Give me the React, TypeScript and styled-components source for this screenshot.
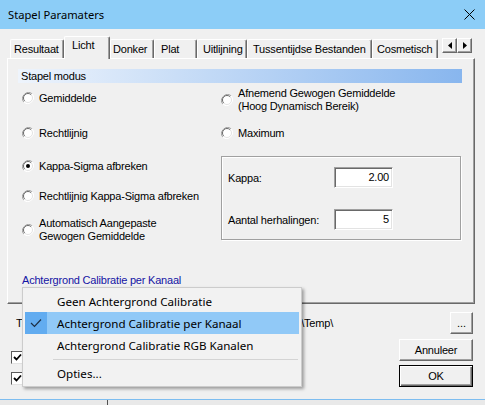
import React from 'react';
import styled, { createGlobalStyle } from 'styled-components';

const GlobalStyle = createGlobalStyle`
  html, body { margin: 0; padding: 0; }
  body {
    width: 485px;
    height: 405px;
    overflow: hidden;
    background: #e9e9e9;
    font-family: "Liberation Sans", Arial, sans-serif;
  }
  * { box-sizing: border-box; }
`;

const Window = styled.div`
  position: relative;
  width: 485px;
  display: flex;
  flex-direction: column;
`;

const TitleBar = styled.div`
  height: 29px;
  background: #8ccdf7;
  display: flex;
  align-items: center;
  padding: 0 10px 0 8px;
  font-family: "Noto Sans", sans-serif;
  font-size: 11.2px;
  color: #000;
`;

const TitleText = styled.span`
  flex: 1;
`;

const Body = styled.div`
  height: 370px;
  background: #f0f0f0;
  padding: 0 10px 0 7px;
  display: flex;
  flex-direction: column;
  font-family: "Liberation Sans", Arial, sans-serif;
  font-size: 11px;
  letter-spacing: -0.2px;
  color: #000;
`;

const TabStrip = styled.div`
  height: 29px;
  display: flex;
  align-items: flex-end;
  padding-left: 3px;
  position: relative;
  z-index: 1;
`;

const Tab = styled.div<{ $w: number; $pl: number; $active?: boolean }>`
  width: ${(p) => p.$w}px;
  height: ${(p) => (p.$active ? 23 : 19)}px;
  margin-bottom: ${(p) => (p.$active ? -1 : 0)}px;
  padding-left: ${(p) => p.$pl}px;
  padding-top: ${(p) => (p.$active ? 1 : 2)}px;
  background: #f0f0f0;
  border-top: 1px solid #fff;
  border-left: 1px solid #fff;
  border-right: 1px solid #696969;
  box-shadow: inset -1px 0 #a0a0a0;
  border-radius: 2px 2px 0 0;
  white-space: nowrap;
  line-height: 14px;
`;

const ScrollArrows = styled.div`
  display: flex;
  align-self: flex-start;
  margin-top: 9px;
  margin-left: 4px;
`;

const ArrowButton = styled.div`
  width: 15px;
  height: 15px;
  display: flex;
  align-items: center;
  justify-content: center;
  background: #f0f0f0;
  border: 1px solid;
  border-color: #fff #696969 #696969 #fff;
  box-shadow: inset -1px -1px #a0a0a0;
`;

const Panel = styled.div`
  height: 246px;
  width: 468px;
  border: 1px solid;
  border-color: #fff #696969 #696969 #fff;
  box-shadow: inset -1px -1px #a0a0a0;
  padding: 10px 12px 0 10px;
  display: flex;
  flex-direction: column;
`;

const SectionBar = styled.div`
  height: 14px;
  line-height: 14px;
  padding-left: 3px;
  background: linear-gradient(to right, #eef4fc, #88b6ee);
`;

const Options = styled.div`
  display: grid;
  grid-template-columns: 199px 240px;
  margin-left: 4px;
  align-items: start;
`;

const Column = styled.div`
  display: flex;
  flex-direction: column;
`;

const RadioRow = styled.div<{ $mt: number }>`
  display: flex;
  align-items: center;
  gap: 5px;
  margin-top: ${(p) => p.$mt}px;
`;

const RadioLabel = styled.span<{ $lh: number }>`
  line-height: ${(p) => p.$lh}px;
  white-space: nowrap;
`;

const ParamBox = styled.div`
  margin-top: 16px;
  height: 84px;
  width: 240px;
  border: 1px solid #a0a0a0;
  box-shadow: inset 1px 1px #fff, 1px 1px #fff;
  padding: 10px 0 0 6px;
  display: flex;
  flex-direction: column;
  gap: 21px;
`;

const FieldRow = styled.div`
  display: flex;
  align-items: center;
  height: 21px;
`;

const FieldLabel = styled.span`
  width: 106px;
`;

const NumberField = styled.div`
  width: 59px;
  height: 21px;
  background: #fff;
  border: 1px solid;
  border-color: #a0a0a0 #fff #fff #a0a0a0;
  box-shadow: inset 1px 1px #696969, inset -1px -1px #e3e3e3;
  text-align: right;
  padding: 2px 3px 0 0;
  line-height: 14px;
`;

const CalibLink = styled.div`
  margin: 30px 0 0 4px;
  line-height: 14px;
  color: #1414a4;
`;

const PathRow = styled.div`
  margin-top: 8px;
  height: 22px;
  display: flex;
  align-items: center;
`;

const PathField = styled.div`
  width: 317px;
  margin-left: 9px;
  display: flex;
  justify-content: space-between;
  white-space: nowrap;
`;

const Button = styled.div<{ $w: number; $default?: boolean }>`
  width: ${(p) => p.$w}px;
  height: 22px;
  display: flex;
  align-items: center;
  justify-content: center;
  background: #f0f0f0;
  border: 1px solid;
  border-color: ${(p) => (p.$default ? '#000' : '#fff #696969 #696969 #fff')};
  box-shadow: ${(p) =>
    p.$default
      ? 'inset 1px 1px #fff, inset -1px -1px #696969, inset -2px -2px #a0a0a0'
      : 'inset -1px -1px #a0a0a0'};
`;

const BrowseButton = styled(Button)`
  margin-left: auto;
  margin-right: 2px;
  letter-spacing: 0;
`;

const LowerRow = styled.div`
  margin-top: 5px;
  display: flex;
`;

const CheckColumn = styled.div`
  display: flex;
  flex-direction: column;
  gap: 8px;
  padding: 12px 0 0 4px;
`;

const CheckBoxBox = styled.div`
  width: 13px;
  height: 13px;
  background: #fff;
  border: 1px solid;
  border-color: #5a5a5a #e3e3e3 #e3e3e3 #5a5a5a;
  display: flex;
  align-items: center;
  justify-content: center;
`;

const ButtonColumn = styled.div`
  margin-left: auto;
  margin-right: 2px;
  display: flex;
  flex-direction: column;
  gap: 4px;
`;

const WindowEdge = styled.div`
  height: 1px;
  background: #7dbdf0;
`;

const Backdrop = styled.div`
  height: 5px;
  display: flex;
  background: #e9e9e9;
`;

const BackdropDivider = styled.div`
  margin-left: 107px;
  width: 1px;
  background: #505050;
`;

const Menu = styled.div`
  position: absolute;
  left: 22px;
  top: 287px;
  width: 280px;
  padding: 2px;
  background: #f2f2f2;
  border: 1px solid #cccccc;
  box-shadow: 2px 2px 3px rgba(0, 0, 0, 0.35);
  font-family: "Noto Sans", sans-serif;
  font-size: 11.6px;
  color: #000;
  z-index: 5;
`;

const MenuItem = styled.div<{ $selected?: boolean }>`
  height: 22px;
  display: flex;
  align-items: center;
  background: ${(p) => (p.$selected ? '#91c9f7' : 'transparent')};
  white-space: nowrap;
`;

const CheckGutter = styled.div<{ $selected?: boolean }>`
  width: 22px;
  height: 22px;
  margin-right: 10px;
  display: flex;
  align-items: center;
  justify-content: center;
  background: ${(p) => (p.$selected ? '#62acf0' : 'transparent')};
`;

const MenuSeparator = styled.div`
  height: 6px;
  display: flex;
  align-items: center;
  padding: 0 1px 0 28px;
  &::after {
    content: '';
    flex: 1;
    height: 1px;
    background: #d4d4d4;
  }
`;

const Radio = ({ checked }: { checked?: boolean }) => (
  <svg width="12" height="12" viewBox="0 0 12 12" style={{ flex: 'none' }}>
    <circle cx="6" cy="6" r="5.5" fill="#fff" />
    <path d="M10.2 1.8 A6 6 0 0 0 1.8 10.2" stroke="#a0a0a0" strokeWidth="1" fill="none" />
    <path d="M9.2 2.8 A4.5 4.5 0 0 0 2.8 9.2" stroke="#696969" strokeWidth="1" fill="none" />
    <path d="M1.8 10.2 A6 6 0 0 0 10.2 1.8" stroke="#ffffff" strokeWidth="1" fill="none" />
    <path d="M2.8 9.2 A4.5 4.5 0 0 0 9.2 2.8" stroke="#e3e3e3" strokeWidth="1" fill="none" />
    {checked && <circle cx="6" cy="6" r="2" fill="#000" />}
  </svg>
);

const CheckBox = () => (
  <CheckBoxBox>
    <svg width="9" height="9" viewBox="0 0 9 9">
      <path d="M1 4 L3.5 6.5 L8 1.5" stroke="#000" strokeWidth="1.8" fill="none" />
    </svg>
  </CheckBoxBox>
);

const tabs = [
  { label: 'Resultaat', w: 54, pl: 3 },
  { label: 'Licht', w: 46, pl: 7, active: true },
  { label: 'Donker', w: 44, pl: 2 },
  { label: 'Plat', w: 43, pl: 6 },
  { label: 'Uitlijning', w: 50, pl: 5 },
  { label: 'Tussentijdse Bestanden', w: 125, pl: 5 },
  { label: 'Cosmetisch', w: 66, pl: 4 },
];

export default function App() {
  return (
    <>
      <GlobalStyle />
      <Window>
        <TitleBar>
          <TitleText>Stapel Paramaters</TitleText>
          <svg width="11" height="11" viewBox="0 0 11 11">
            <path d="M0.5 0.5 L10.5 10.5 M10.5 0.5 L0.5 10.5" stroke="#000" strokeWidth="1" />
          </svg>
        </TitleBar>
        <Body>
          <TabStrip>
            {tabs.map((t) => (
              <Tab key={t.label} $w={t.w} $pl={t.pl} $active={t.active}>
                {t.label}
              </Tab>
            ))}
            <ScrollArrows>
              <ArrowButton>
                <svg width="4" height="7" viewBox="0 0 4 7">
                  <path d="M4 0 L0 3.5 L4 7 Z" fill="#000" />
                </svg>
              </ArrowButton>
              <ArrowButton>
                <svg width="4" height="7" viewBox="0 0 4 7">
                  <path d="M0 0 L4 3.5 L0 7 Z" fill="#000" />
                </svg>
              </ArrowButton>
            </ScrollArrows>
          </TabStrip>
          <Panel>
            <SectionBar>Stapel modus</SectionBar>
            <Options>
              <Column>
                <RadioRow $mt={8}>
                  <Radio />
                  <RadioLabel $lh={14}>Gemiddelde</RadioLabel>
                </RadioRow>
                <RadioRow $mt={21}>
                  <Radio />
                  <RadioLabel $lh={14}>Rechtlijnig</RadioLabel>
                </RadioRow>
                <RadioRow $mt={19}>
                  <Radio checked />
                  <RadioLabel $lh={14}>Kappa-Sigma afbreken</RadioLabel>
                </RadioRow>
                <RadioRow $mt={16}>
                  <Radio />
                  <RadioLabel $lh={14}>Rechtlijnig Kappa-Sigma afbreken</RadioLabel>
                </RadioRow>
                <RadioRow $mt={14}>
                  <Radio />
                  <RadioLabel $lh={13}>
                    Automatisch Aangepaste
                    <br />
                    Gewogen Gemiddelde
                  </RadioLabel>
                </RadioRow>
              </Column>
              <Column>
                <RadioRow $mt={4}>
                  <Radio />
                  <RadioLabel $lh={13}>
                    Afnemend Gewogen Gemiddelde
                    <br />
                    (Hoog Dynamisch Bereik)
                  </RadioLabel>
                </RadioRow>
                <RadioRow $mt={13}>
                  <Radio />
                  <RadioLabel $lh={14}>Maximum</RadioLabel>
                </RadioRow>
                <ParamBox>
                  <FieldRow>
                    <FieldLabel>Kappa:</FieldLabel>
                    <NumberField>2.00</NumberField>
                  </FieldRow>
                  <FieldRow>
                    <FieldLabel>Aantal herhalingen:</FieldLabel>
                    <NumberField>5</NumberField>
                  </FieldRow>
                </ParamBox>
              </Column>
            </Options>
            <CalibLink>Achtergrond Calibratie per Kanaal</CalibLink>
          </Panel>
          <PathRow>
            <PathField>
              <span>Tijdelijke map:</span>
              <span>C:\Temp\</span>
            </PathField>
            <BrowseButton $w={23}>...</BrowseButton>
          </PathRow>
          <LowerRow>
            <CheckColumn>
              <CheckBox />
              <CheckBox />
            </CheckColumn>
            <ButtonColumn>
              <Button $w={74}>Annuleer</Button>
              <Button $w={74} $default>
                OK
              </Button>
            </ButtonColumn>
          </LowerRow>
        </Body>
        <WindowEdge />
        <Backdrop>
          <BackdropDivider />
        </Backdrop>
        <Menu>
          <MenuItem>
            <CheckGutter />
            Geen Achtergrond Calibratie
          </MenuItem>
          <MenuItem $selected>
            <CheckGutter $selected>
              <svg width="12" height="10" viewBox="0 0 12 10">
                <path d="M1 5 L4.5 8.5 L11 1.5" stroke="#1d2f45" strokeWidth="1.2" fill="none" />
              </svg>
            </CheckGutter>
            Achtergrond Calibratie per Kanaal
          </MenuItem>
          <MenuItem>
            <CheckGutter />
            Achtergrond Calibratie RGB Kanalen
          </MenuItem>
          <MenuSeparator />
          <MenuItem>
            <CheckGutter />
            Opties...
          </MenuItem>
        </Menu>
      </Window>
    </>
  );
}
